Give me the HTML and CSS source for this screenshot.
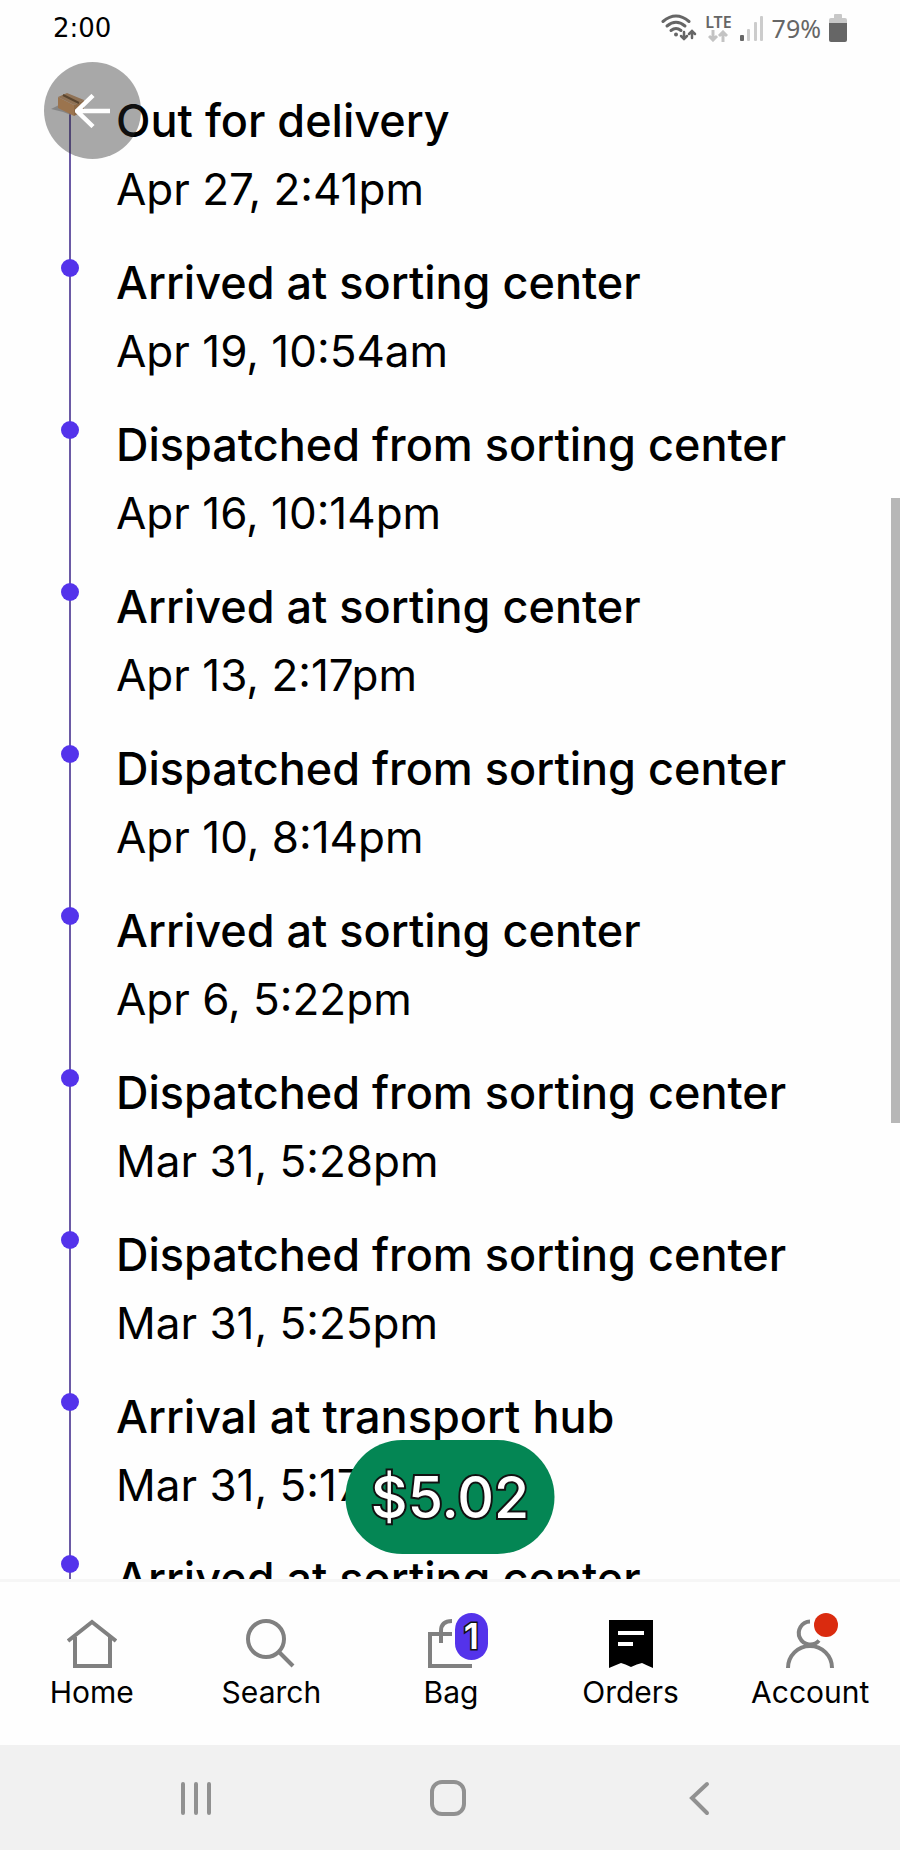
FILE: index.html
```html
<!DOCTYPE html>
<html lang="en">
<head>
	<meta charset="utf-8">
	<meta name="viewport" content="width=device-width, initial-scale=1">
	<title>Order tracking</title>
	<link rel="stylesheet" href="styles.css">
</head>
<body>
	<!-- Phone status bar -->
	<header class="status-bar">
		<span class="clock">2:00</span>
		<div class="status-icons">
			<svg class="wifi" width="36" height="28" viewBox="0 0 36 28" fill="none" stroke="#666" stroke-width="3" stroke-linecap="round">
				<path d="M2 7.500Q15 -3.500 28 7.500"/>
				<path d="M6 12Q15 4.500 24 12"/>
				<path d="M10 16.500Q15 12.500 20 16.500"/>
				<circle cx="15" cy="20.500" r="2" fill="#666" stroke="none"/>
				<path d="M23 18v7M20 22l3 3 3-3M31 24v-7M28 20l3-3 3 3" stroke-width="2.500"/>
			</svg>
			<div class="lte">
				<span>LTE</span>
				<svg width="20" height="12" viewBox="0 0 20 12" fill="none" stroke="#c3c3c3" stroke-width="3">
					<path d="M5 0v10M1 6l4 4 4-4M15 12V2M11 6l4-4 4 4"/>
				</svg>
			</div>
			<svg class="signal" width="24" height="26" viewBox="0 0 24 26">
				<rect x="0" y="20" width="4" height="6" rx="1" fill="#666"/>
				<rect x="7" y="14" width="3" height="12" rx="1" fill="#ccc"/>
				<rect x="14" y="7" width="3" height="19" rx="1" fill="#ccc"/>
				<rect x="20" y="1" width="3" height="25" rx="1" fill="#ccc"/>
			</svg>
			<span class="percent">79%</span>
			<svg class="battery" width="18" height="28" viewBox="0 0 18 28">
				<path d="M5 1q0-1 1-1h6q1 0 1 1v3h3q2 0 2 2v4H0V6q0-2 2-2h3z" fill="#c8c8c8"/>
				<path d="M0 9h18v17q0 2-2 2H2q-2 0-2-2z" fill="#666"/>
			</svg>
		</div>
	</header>

	<!-- Tracking history -->
	<main class="tracking">
		<ol class="timeline">
			<li class="event latest">
				<svg class="parcel" width="38" height="26" viewBox="0 0 38 26">
					<path d="M0 17l8-4 12 10-8-3z" fill="#c4c4c4"/>
					<path d="M7 5l16 8v11L7 16z" fill="#e8a768"/>
					<path d="M23 13l10-5v11l-10 5z" fill="#cf955c"/>
					<path d="M7 5l9-4 17 7-10 5z" fill="#d6a474"/>
					<path d="M12 3l16 8" stroke="#7a5833" stroke-width="2"/>
				</svg>
				<h2>Out for delivery</h2>
				<p>Apr 27, 2:41pm</p>
			</li>
			<li class="event">
				<h2>Arrived at sorting center</h2>
				<p>Apr 19, 10:54am</p>
			</li>
			<li class="event">
				<h2>Dispatched from sorting center</h2>
				<p>Apr 16, 10:14pm</p>
			</li>
			<li class="event">
				<h2>Arrived at sorting center</h2>
				<p>Apr 13, 2:17pm</p>
			</li>
			<li class="event">
				<h2>Dispatched from sorting center</h2>
				<p>Apr 10, 8:14pm</p>
			</li>
			<li class="event">
				<h2>Arrived at sorting center</h2>
				<p>Apr 6, 5:22pm</p>
			</li>
			<li class="event">
				<h2>Dispatched from sorting center</h2>
				<p>Mar 31, 5:28pm</p>
			</li>
			<li class="event">
				<h2>Dispatched from sorting center</h2>
				<p>Mar 31, 5:25pm</p>
			</li>
			<li class="event">
				<h2>Arrival at transport hub</h2>
				<p>Mar 31, 5:17pm</p>
			</li>
			<li class="event">
				<h2>Arrived at sorting center</h2>
			</li>
		</ol>

		<button class="back" type="button" aria-label="Back">
			<svg width="36" height="34" viewBox="0 0 36 34" fill="none" stroke="#fff" stroke-width="4.500">
				<path d="M35 17H3M18 1.500L2 17l16 15.500"/>
			</svg>
		</button>
		<div class="scroll-thumb"></div>
		<button class="credit" type="button">$5.02</button>
	</main>

	<!-- App tabs -->
	<nav class="tabs">
		<a href="#home">
			<svg width="50" height="50" viewBox="0 0 50 50" fill="none" stroke="#808080" stroke-width="4">
				<path d="M1 22L25 3l24 19M8 18v29h35V18"/>
			</svg>
			Home
		</a>
		<a href="#search">
			<svg width="50" height="50" viewBox="0 0 50 50" fill="none" stroke="#808080" stroke-width="4">
				<circle cx="20" cy="20" r="18"/>
				<path d="M33 33l14 14"/>
			</svg>
			Search
		</a>
		<a href="#bag">
			<span class="icon">
				<svg width="50" height="50" viewBox="0 0 50 50" fill="none" stroke="#808080" stroke-width="4">
					<path d="M26 15H4v32h42M15 24V12q0-10 11-10"/>
				</svg>
				<span class="count">1</span>
			</span>
			Bag
		</a>
		<a href="#orders" aria-current="page">
			<svg width="50" height="50" viewBox="0 0 50 50">
				<path d="M3 1h44v48q-7-3-11-5-5 1-11 4-6-3-10-4-5 2-12 5z" fill="#000"/>
				<path d="M12 14h26M12 25h15" stroke="#fff" stroke-width="4"/>
			</svg>
			Orders
		</a>
		<a href="#account">
			<span class="icon">
				<svg width="50" height="50" viewBox="0 0 50 50" fill="none" stroke="#808080" stroke-width="4">
					<path d="M25 2.500a11.500 11.500 0 1 0 9 19M3 49a22 22 0 0 1 44 0"/>
				</svg>
				<span class="alert"></span>
			</span>
			Account
		</a>
	</nav>

	<!-- Android buttons -->
	<footer class="system-nav">
		<button type="button" aria-label="Recent apps">
			<svg width="36" height="36" viewBox="0 0 36 36" stroke="#919191" stroke-width="4" stroke-linecap="round">
				<path d="M5 4v29M18 4v29M31 4v29"/>
			</svg>
		</button>
		<button type="button" aria-label="Home">
			<svg width="36" height="36" viewBox="0 0 36 36" fill="none" stroke="#919191" stroke-width="4">
				<rect x="2" y="2" width="32" height="32" rx="10"/>
			</svg>
		</button>
		<button type="button" aria-label="Back">
			<svg width="36" height="36" viewBox="0 0 36 36" fill="none" stroke="#919191" stroke-width="4" stroke-linecap="round">
				<path d="M26 4L11 18l15 15"/>
			</svg>
		</button>
	</footer>
</body>
</html>
```

FILE: styles.css
```css
* {
	margin: 0;
	padding: 0;
	box-sizing: border-box;
}

body {
	display: flex;
	flex-direction: column;
	height: 100vh;
	background-color: #fefefe;
	color: #000;
	font-family: Inter, "Liberation Sans", sans-serif;
}

button {
	border: none;
	background: none;
	font-family: inherit;
	cursor: pointer;
}

svg {
	display: block;
}

/* Status bar */
.status-bar {
	display: flex;
	justify-content: space-between;
	align-items: center;
	height: 56px;
	padding: 0 53px;
}

.clock {
	font-family: "DejaVu Sans", sans-serif;
	font-size: 26px;
}

.status-icons {
	display: flex;
	align-items: center;
	gap: 8px;
	color: #666;
}

.lte {
	display: flex;
	flex-direction: column;
	align-items: center;
	font-family: "Noto Sans", sans-serif;
	font-size: 16px;
	line-height: 15px;
	font-weight: 600;
}

.percent {
	font-family: "Noto Sans", sans-serif;
	font-size: 25px;
}

/* Tracking history */
.tracking {
	position: relative;
	flex: 1;
	min-height: 0;
	overflow: hidden;
	padding-top: 30px;
}

.timeline {
	list-style: none;
}

.event {
	position: relative;
	padding: 0 24px 24px 116px;
	font-size: 44px;
	line-height: 69px;
}

.event h2 {
	font-size: 45px;
	font-weight: 500;
}

/* Vertical line that joins the events */
.event::before {
	content: "";
	position: absolute;
	left: 69px;
	top: 20px;
	width: 2px;
	height: 100%;
	background-color: #6b5aa5;
}

/* Dot on the line */
.event::after {
	content: "";
	position: absolute;
	left: 61px;
	top: 11px;
	width: 18px;
	height: 18px;
	border-radius: 50%;
	background-color: #5433eb;
}

.latest::after {
	display: none;
}

.parcel {
	position: absolute;
	left: 51px;
	top: 6px;
	z-index: 1;
}

.back {
	position: absolute;
	left: 44px;
	top: 6px;
	z-index: 2;
	display: flex;
	justify-content: center;
	align-items: center;
	width: 97px;
	height: 97px;
	border-radius: 50%;
	background-color: rgba(40, 40, 40, 0.4);
}

.scroll-thumb {
	position: absolute;
	right: 0;
	top: 442px;
	width: 9px;
	height: 625px;
	background-color: #b7b7b7;
}

.credit {
	position: absolute;
	left: 50%;
	bottom: 25px;
	transform: translateX(-50%);
	width: 209px;
	height: 114px;
	border-radius: 57px;
	background-color: #048654;
	color: #fff;
	font-size: 57px;
	font-weight: 500;
	-webkit-text-stroke: 4px #111;
	paint-order: stroke fill;
}

/* App tabs */
.tabs {
	display: grid;
	grid-template-columns: repeat(5, 1fr);
	padding: 37px 0 35px 2px;
	border-top: 3px solid #f6f6f6;
}

.tabs a {
	display: flex;
	flex-direction: column;
	align-items: center;
	gap: 5px;
	color: #000;
	font-size: 30px;
	line-height: 36px;
	text-decoration: none;
}

.icon {
	position: relative;
}

.count {
	position: absolute;
	left: 29px;
	top: -6px;
	width: 33px;
	height: 47px;
	border-radius: 17px;
	background-color: #5433eb;
	color: #fff;
	font-size: 36px;
	font-weight: 600;
	line-height: 47px;
	text-align: center;
	-webkit-text-stroke: 3px #111;
	paint-order: stroke fill;
}

.alert {
	position: absolute;
	left: 29px;
	top: -6px;
	width: 24px;
	height: 24px;
	border-radius: 50%;
	background-color: #da2b0f;
}

/* Android buttons */
.system-nav {
	display: flex;
	justify-content: space-between;
	align-items: center;
	height: 105px;
	padding: 0 183px 0 178px;
	background-color: #f1f1f1;
}
```
